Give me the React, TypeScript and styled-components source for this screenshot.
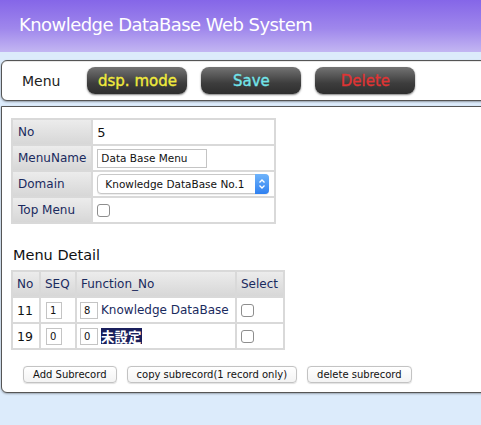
import React from "react";
import styled, { createGlobalStyle } from "styled-components";

const Global = createGlobalStyle`
  html, body { margin: 0; padding: 0; }
  body {
    background: #dcebfb;
    font-family: "DejaVu Sans", "Noto Sans CJK JP", sans-serif;
    overflow: hidden;
    width: 481px;
    height: 425px;
  }
`;

const Page = styled.div`
  display: flex;
  flex-direction: column;
  width: 481px;
`;

const Header = styled.header`
  height: 52px;
  background: linear-gradient(#8566e8 0%, #9f87ec 55%, #c3b6f2 100%);
  display: flex;
  align-items: center;
  padding-left: 19px;
  padding-bottom: 3px;
  box-sizing: border-box;
`;

const Title = styled.h1`
  margin: 0;
  color: #fff;
  font-size: 18px;
  font-weight: normal;
  letter-spacing: -0.55px;
`;

const Toolbar = styled.div`
  margin: 8px -12px 0 1px;
  height: 41px;
  box-sizing: border-box;
  background: #fff;
  border: 1px solid #555;
  border-radius: 6px;
  box-shadow: 0 1px 2px rgba(0, 0, 0, 0.35), inset 0 1px 0 #e8e8e8;
  display: flex;
  align-items: center;
  padding-left: 20px;
`;

const ToolbarLabel = styled.span`
  font-size: 14px;
  color: #222;
  margin-right: 27px;
`;

const ToolButton = styled.button<{ $color: string }>`
  width: 100px;
  height: 27px;
  margin-right: 14px;
  border: none;
  border-radius: 8px;
  background: linear-gradient(#737373, #3d3d3d 60%, #2e2e2e);
  box-shadow: 0 1px 2px rgba(0, 0, 0, 0.5);
  color: ${(p) => p.$color};
  -webkit-text-stroke: 0.35px ${(p) => p.$color};
  font-family: "DejaVu Sans", sans-serif;
  font-size: 15px;
  padding: 0;
  cursor: pointer;
`;

const Panel = styled.main`
  margin: 5px -12px 0 1px;
  height: 287px;
  box-sizing: border-box;
  background: #fff;
  border: 1px solid #555;
  border-radius: 0 0 0 6px;
  box-shadow: 0 1px 2px rgba(0, 0, 0, 0.3);
  padding: 11px 0 0 9px;
  display: flex;
  flex-direction: column;
  align-items: flex-start;
`;

const Grid = styled.table`
  border-collapse: separate;
  border-spacing: 2px;
  background: #d9d9d9;
  font-size: 12px;
`;

const LabelCell = styled.td<{ $w?: number }>`
  background: linear-gradient(#ececec, #d7d7d7);
  color: #1a2a5e;
  height: 24px;
  padding: 0 5px;
  box-sizing: border-box;
  width: ${(p) => (p.$w ? `${p.$w}px` : "auto")};
  white-space: nowrap;
`;

const HeadCell = styled.th<{ $w: number }>`
  background: linear-gradient(#ececec, #d7d7d7);
  color: #1a2a5e;
  font-weight: normal;
  text-align: left;
  height: 24px;
  padding: 0 4px;
  box-sizing: border-box;
  width: ${(p) => p.$w}px;
  white-space: nowrap;
`;

const ValueCell = styled.td<{ $w?: number; $size?: number; $padLeft?: number }>`
  background: #fff;
  height: 24px;
  padding: 0 4px 0 ${(p) => p.$padLeft ?? 4}px;
  box-sizing: border-box;
  color: #111;
  white-space: nowrap;
  font-size: ${(p) => p.$size ?? 12}px;
  width: ${(p) => (p.$w ? `${p.$w}px` : "auto")};
`;

const CellRow = styled.div`
  display: flex;
  align-items: center;
  gap: 3px;
`;

const TextInput = styled.input<{ $w: number }>`
  width: ${(p) => p.$w}px;
  height: 19px;
  box-sizing: border-box;
  border: 1px solid #c4c4c4;
  padding: 0 3px;
  font-family: "DejaVu Sans", sans-serif;
  font-size: 10.5px;
  color: #111;
  margin: 0;
  outline: none;
`;

const SmallInput = styled.input<{ $w?: number }>`
  width: ${(p) => p.$w ?? 16}px;
  height: 17px;
  box-sizing: border-box;
  border: 1px solid #c4c4c4;
  padding: 0 3px;
  font-family: "DejaVu Sans", sans-serif;
  font-size: 10px;
  color: #111;
  margin: 0 0 0 1px;
  outline: none;
`;

const SelectBox = styled.div`
  position: relative;
  width: 172px;
  height: 20px;
  box-sizing: border-box;
  border: 1px solid #c8c8c8;
  border-radius: 4px;
  background: #fff;
  box-shadow: 0 1px 1px rgba(0, 0, 0, 0.08);
  display: flex;
  align-items: center;
  padding-left: 7px;
  font-size: 10.5px;
  color: #111;
`;

const Stepper = styled.span`
  position: absolute;
  right: -1px;
  top: -1px;
  width: 14px;
  height: 20px;
  border-radius: 0 4px 4px 0;
  background: linear-gradient(#6fb4fb, #2f80f0);
  display: flex;
  align-items: center;
  justify-content: center;
`;

const Check = styled.span`
  display: inline-block;
  width: 11px;
  height: 11px;
  border: 1px solid #8e8e8e;
  border-radius: 3px;
  background: #fff;
  vertical-align: middle;
`;

const Heading = styled.h2`
  margin: 23px 0 7px 2px;
  font-size: 14.5px;
  font-weight: normal;
  color: #111;
`;

const FuncName = styled.span`
  color: #1a2a5e;
  font-size: 12px;
`;

const Unset = styled.span`
  background: #1a1f5c;
  color: #fff;
  font-weight: bold;
  font-size: 13.5px;
  font-family: "Noto Sans CJK JP", sans-serif;
  line-height: 16px;
`;

const Actions = styled.div`
  display: flex;
  gap: 10px;
  margin: 16px 0 0 12px;
`;

const PushButton = styled.button`
  height: 17px;
  box-sizing: border-box;
  border: 1px solid #c3c3c3;
  border-radius: 4px;
  background: linear-gradient(#ffffff, #f3f3f3);
  box-shadow: 0 0.5px 1px rgba(0, 0, 0, 0.12);
  font-family: "DejaVu Sans", sans-serif;
  font-size: 10px;
  color: #111;
  padding: 0 9px;
  cursor: pointer;
`;

const StepperIcon = () => (
  <svg width="8" height="12" viewBox="0 0 8 12">
    <path d="M1.5 4.5 L4 2 L6.5 4.5" fill="none" stroke="#fff" strokeWidth="1.3" />
    <path d="M1.5 7.5 L4 10 L6.5 7.5" fill="none" stroke="#fff" strokeWidth="1.3" />
  </svg>
);

const detail = [
  { no: "11", seq: "1", fn: "8", name: "Knowledge DataBase", unset: false },
  { no: "19", seq: "0", fn: "0", name: "未設定", unset: true },
];

export default function App() {
  return (
    <Page>
      <Global />
      <Header>
        <Title>Knowledge DataBase Web System</Title>
      </Header>
      <Toolbar>
        <ToolbarLabel>Menu</ToolbarLabel>
        <ToolButton $color="#f0ea3c">dsp. mode</ToolButton>
        <ToolButton $color="#72e4ea">Save</ToolButton>
        <ToolButton $color="#df3434">Delete</ToolButton>
      </Toolbar>
      <Panel>
        <Grid>
          <tbody>
            <tr>
              <LabelCell $w={78}>No</LabelCell>
              <ValueCell $w={181} $size={13}>5</ValueCell>
            </tr>
            <tr>
              <LabelCell>MenuName</LabelCell>
              <ValueCell>
                <CellRow>
                  <TextInput $w={110} defaultValue="Data Base Menu" />
                </CellRow>
              </ValueCell>
            </tr>
            <tr>
              <LabelCell>Domain</LabelCell>
              <ValueCell>
                <SelectBox>
                  Knowledge DataBase No.1
                  <Stepper>
                    <StepperIcon />
                  </Stepper>
                </SelectBox>
              </ValueCell>
            </tr>
            <tr>
              <LabelCell>Top Menu</LabelCell>
              <ValueCell>
                <CellRow>
                  <Check />
                </CellRow>
              </ValueCell>
            </tr>
          </tbody>
        </Grid>

        <Heading>Menu Detail</Heading>
        <Grid>
          <thead>
            <tr>
              <HeadCell $w={26}>No</HeadCell>
              <HeadCell $w={34}>SEQ</HeadCell>
              <HeadCell $w={158}>Function_No</HeadCell>
              <HeadCell $w={46}>Select</HeadCell>
            </tr>
          </thead>
          <tbody>
            {detail.map((d) => (
              <tr key={d.no}>
                <ValueCell $size={12.5}>{d.no}</ValueCell>
                <ValueCell>
                  <CellRow>
                    <SmallInput defaultValue={d.seq} />
                  </CellRow>
                </ValueCell>
                <ValueCell $padLeft={2}>
                  <CellRow>
                    <SmallInput $w={18} defaultValue={d.fn} />
                    {d.unset ? <Unset>{d.name}</Unset> : <FuncName>{d.name}</FuncName>}
                  </CellRow>
                </ValueCell>
                <ValueCell>
                  <CellRow>
                    <Check />
                  </CellRow>
                </ValueCell>
              </tr>
            ))}
          </tbody>
        </Grid>

        <Actions>
          <PushButton>Add Subrecord</PushButton>
          <PushButton>copy subrecord(1 record only)</PushButton>
          <PushButton>delete subrecord</PushButton>
        </Actions>
      </Panel>
    </Page>
  );
}
